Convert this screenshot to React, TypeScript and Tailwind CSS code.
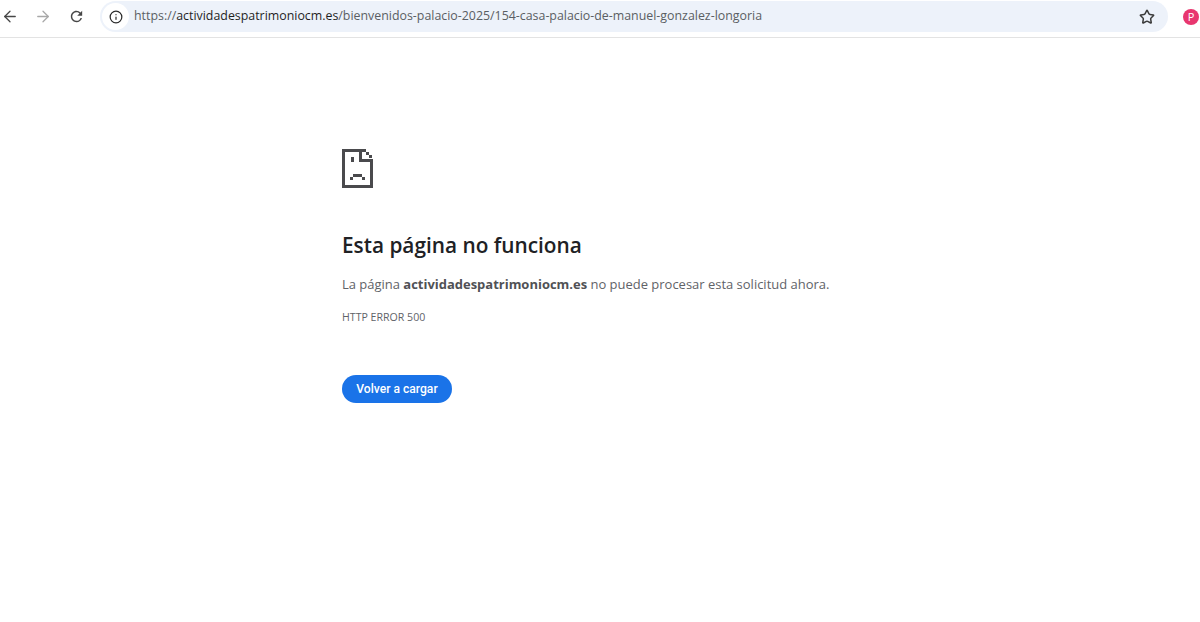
import { ArrowLeft, ArrowRight, Info, Star } from 'lucide-react';

function SadTab() {
  // pixel art sad page, same grid as the browser error icon
  return (
    <svg width="32" height="40" viewBox="0 0 32 40" fill="#4a4a4d" aria-hidden="true">
      <path d="M0 1h24v3h-21v33h25v-25h3v28h-31z" />
      <path d="M17 1h3v10h11v3h-14z" />
      <rect x="24" y="4" width="3" height="3" />
      <rect x="27" y="7" width="3" height="3" />
      <rect x="9" y="9" width="3" height="5" />
      <rect x="11" y="26" width="9" height="3" />
      <rect x="8" y="29" width="3" height="3" />
      <rect x="20" y="29" width="3" height="3" />
    </svg>
  );
}

export default function App() {
  return (
    <div className="flex h-[622px] w-[1200px] flex-col overflow-hidden bg-white font-['Open_Sans','Noto_Sans',sans-serif]">
      {/* Toolbar */}
      <div className="flex h-[38px] shrink-0 items-center border-b border-[#e3e3e3] pb-1 pl-[1px] pr-[1px]">
        <button className="flex w-[18px] justify-center text-[#474747]">
          <ArrowLeft size={19} strokeWidth={1.7} />
        </button>
        <button className="ml-[15px] flex w-[18px] justify-center text-[#a8a8a8]">
          <ArrowRight size={19} strokeWidth={1.7} />
        </button>
        <button className="ml-[15px] flex w-[18px] justify-center text-[#474747]">
          <svg width="17" height="17" viewBox="0 0 24 24" fill="currentColor" aria-hidden="true">
            <path d="M17.65 6.35A7.958 7.958 0 0 0 12 4c-4.42 0-7.99 3.58-7.99 8s3.57 8 7.99 8c3.73 0 6.84-2.55 7.73-6h-2.08A5.99 5.99 0 0 1 12 18c-3.31 0-6-2.69-6-6s2.69-6 6-6c1.66 0 3.14.69 4.22 1.78L13 11h7V4l-2.35 2.35z" />
          </svg>
        </button>
        <div className="ml-[15px] flex h-[31px] w-[1068px] items-center rounded-full bg-[#edf2fa] pl-[2px] pr-[13px]">
          <span className="flex h-[27px] w-[27px] items-center justify-center rounded-full bg-white text-[#2a2a2a]">
            <Info size={14} strokeWidth={2.1} />
          </span>
          <span className="ml-[5px] flex-1 whitespace-nowrap text-[12.38px] text-[#5a5e63]">
            https://<span className="text-[#1f1f1f]">actividadespatrimoniocm.es</span>/bienvenidos-palacio-2025/154-casa-palacio-de-manuel-gonzalez-longoria
          </span>
          <Star size={16} strokeWidth={2.3} className="text-[#3c3c3c]" />
        </div>
        <span className="ml-[15px] flex h-[16px] w-[16px] items-center justify-center rounded-full bg-[#e8366f] text-[11px] leading-none text-white">
          P
        </span>
      </div>

      {/* Error page */}
      <main className="ml-[342px] w-[520px] pt-[110px]">
        <SadTab />
        <h1 className="mt-[42px] text-[20.8px] leading-[30px] font-semibold whitespace-nowrap text-[#202124]">
          Esta página no funciona
        </h1>
        <p className="mt-[14px] text-[12.97px] leading-[20px] whitespace-nowrap text-[#5f6368]">
          La página <strong className="font-bold text-[#505155]">actividadespatrimoniocm.es</strong> no puede procesar esta solicitud ahora.
        </p>
        <p className="mt-[16px] text-[10.6px] leading-[14px] whitespace-nowrap text-[#5f6368]">HTTP ERROR 500</p>
        <button className="mt-[51px] flex h-[28px] w-[110px] items-center justify-center rounded-full bg-[#1a73e8] font-['Roboto',sans-serif] text-[12.1px] font-medium text-white">
          Volver a cargar
        </button>
      </main>
    </div>
  );
}
